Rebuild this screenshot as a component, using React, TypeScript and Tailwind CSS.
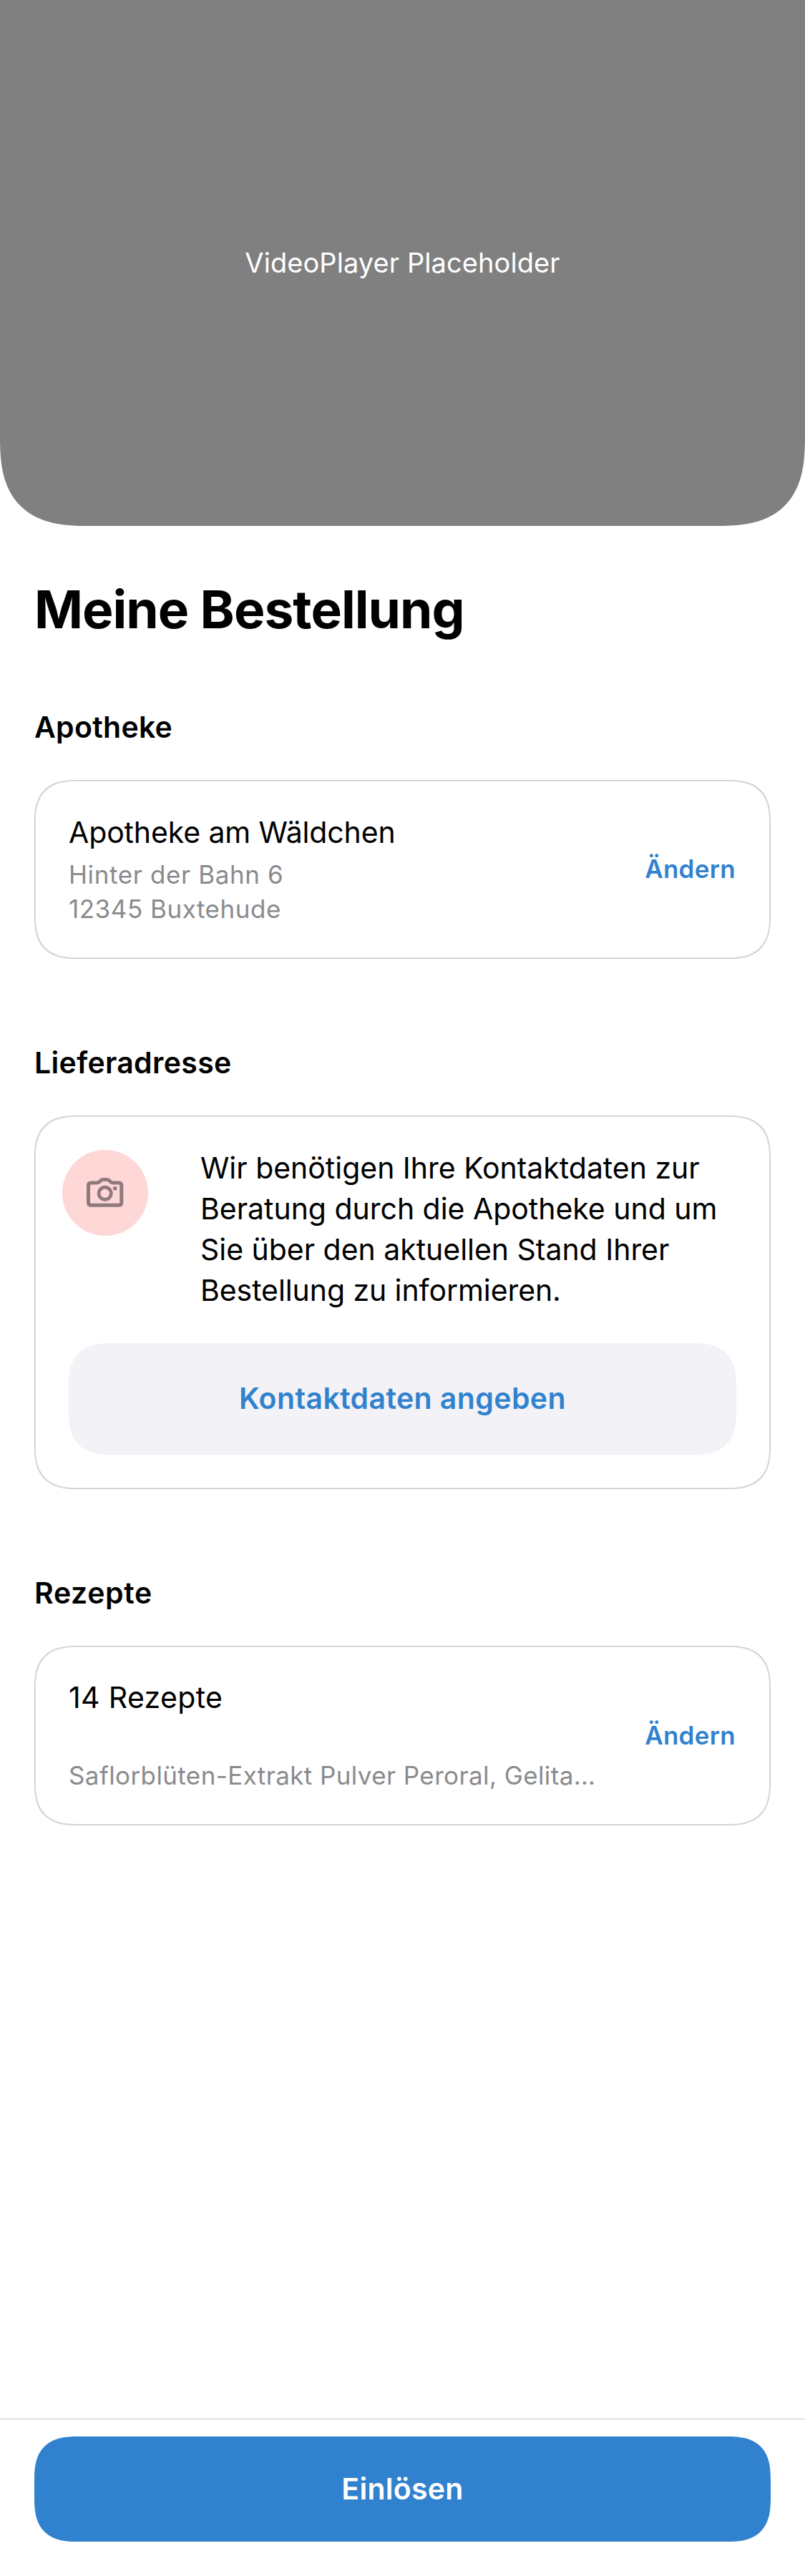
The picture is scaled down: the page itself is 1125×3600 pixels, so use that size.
import React from 'react';

function CameraIcon() {
  return (
    <svg width="52" height="41" viewBox="0 0 52 41" fill="none" className="text-[#907a7e]">
      <path
        d="M6.3 7H13.8C16.2 7 17.6 6.2 19 4.6C20.2 3.1 21.2 2.6 22.8 2.6H28.6C30.2 2.6 31.2 3.1 32.4 4.6C33.8 6.2 35.2 7 37.6 7H45C47.4 7 48.8 8.4 48.8 10.8V34.4C48.8 36.8 47.4 38.2 45 38.2H6.3C3.9 38.2 2.5 36.8 2.5 34.4V10.8C2.5 8.4 3.9 7 6.3 7Z"
        stroke="currentColor"
        strokeWidth="5"
      />
      <circle cx="25.7" cy="21.8" r="8.6" stroke="currentColor" strokeWidth="4.7" />
      <circle cx="39.7" cy="14.8" r="2.8" fill="currentColor" />
    </svg>
  );
}

function SectionTitle({ children, className }: { children: React.ReactNode; className: string }) {
  return <h2 className={`text-[41px] leading-[57px] font-semibold ${className}`}>{children}</h2>;
}

function Card({ children, className }: { children: React.ReactNode; className: string }) {
  return (
    <div
      className={`mt-[45px] rounded-[62px] border border-[#c4c4c6] shadow-[inset_0_0_0_1px_#e4e4e5] [corner-shape:superellipse(1.43)] ${className}`}
    >
      {children}
    </div>
  );
}

function EditButton() {
  return (
    <button className="mr-px text-[35px] leading-[48px] font-semibold tracking-[0.3px] text-[#3182ce]">Ändern</button>
  );
}

export default function App() {
  return (
    <div className="flex h-[3600px] w-[1125px] flex-col bg-white font-['Inter',sans-serif] text-black">
      <div className="flex h-[735px] shrink-0 items-center justify-center rounded-b-[125px] bg-[#808080] text-[38px] tracking-[0.08px] text-white [corner-shape:superellipse(1.43)]">
        VideoPlayer Placeholder
      </div>

      <main className="flex-1 px-12 pt-[70px]">
        <h1 className="text-[73px] leading-[93px] font-bold tracking-[-0.98px]">Meine Bestellung</h1>

        <SectionTitle className="mt-[90px] tracking-[0.27px]">Apotheke</SectionTitle>
        <Card className="flex h-[250px] items-center justify-between px-[47px] pb-0.5">
          <div>
            <p className="text-[41px] leading-[57px] tracking-[-0.13px]">Apotheke am Wäldchen</p>
            <p className="mt-1.5 text-[35px] leading-[48px] tracking-[0.6px] text-[#8a8a8e]">
              Hinter der Bahn 6
              <br />
              <span className="tracking-[0.52px]">12345 Buxtehude</span>
            </p>
          </div>
          <EditButton />
        </Card>

        <SectionTitle className="mt-[117px] tracking-[0.33px]">Lieferadresse</SectionTitle>
        <Card className="h-[522px] pt-11">
          <div className="flex gap-[73px] pl-[38px]">
            <div className="mt-[3px] flex size-[120px] shrink-0 items-center justify-center rounded-full bg-[#fed7d7] pb-px">
              <CameraIcon />
            </div>
            <p className="text-[41px] leading-[57px] tracking-[-0.03px] whitespace-nowrap">
              Wir benötigen Ihre Kontaktdaten zur
              <br />
              Beratung durch die Apotheke und um
              <br />
              Sie über den aktuellen Stand Ihrer
              <br />
              <span className="tracking-[-0.08px]">Bestellung zu informieren.</span>
            </p>
          </div>
          <div className="mt-[45px] px-[47px]">
            <button className="h-[156px] w-full rounded-[62px] bg-[#f2f2f7] pb-0.5 text-[41px] leading-[57px] font-semibold tracking-[0.39px] text-[#3182ce] [corner-shape:superellipse(1.43)]">
              Kontaktdaten angeben
            </button>
          </div>
        </Card>

        <SectionTitle className="mt-[117px] tracking-[0.65px]">Rezepte</SectionTitle>
        <Card className="flex h-[251px] items-center justify-between px-[47px] pb-0.5">
          <div>
            <p className="text-[41px] leading-[57px] tracking-[0.35px]">14 Rezepte</p>
            <p className="mt-14 text-[35px] leading-[48px] tracking-[0.39px] text-[#8a8a8e]">
              Saflorblüten-Extrakt Pulver Peroral, Gelita…
            </p>
          </div>
          <EditButton />
        </Card>
      </main>

      <footer className="h-[220px] shrink-0 border-t border-[#c6c6c8] px-12 pt-6">
        <button className="h-[147px] w-full rounded-[62px] bg-[#3182ce] text-[41px] leading-[57px] font-semibold tracking-[0.27px] text-white [corner-shape:superellipse(1.43)]">
          Einlösen
        </button>
      </footer>
    </div>
  );
}
